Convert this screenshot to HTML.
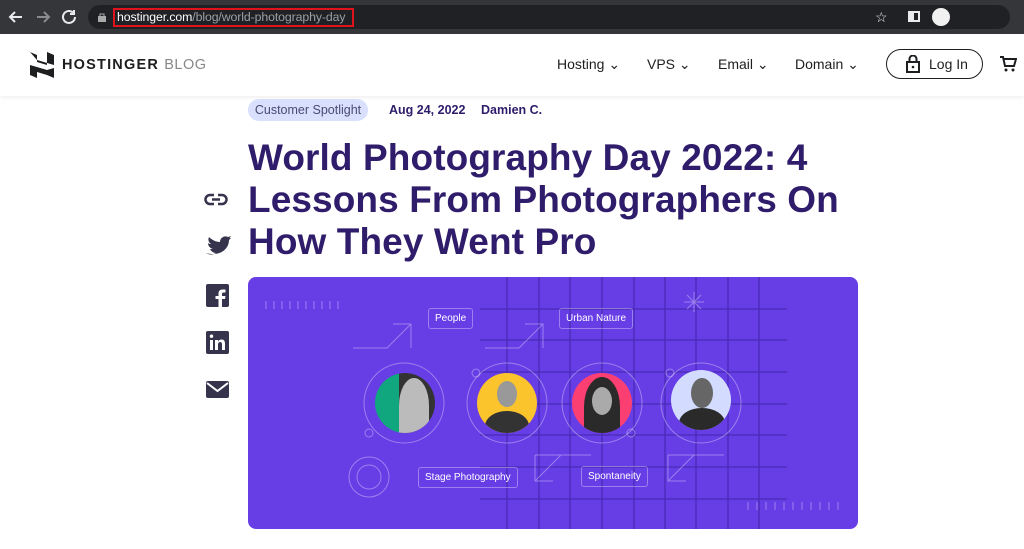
<!DOCTYPE html>
<html><head><meta charset="utf-8"><style>
*{margin:0;padding:0;box-sizing:border-box}
body{width:1024px;height:549px;overflow:hidden;background:#fff;font-family:"Liberation Sans",sans-serif;position:relative}
.chrome{position:absolute;left:0;top:0;width:1024px;height:34px;background:#35363a}
.url{position:absolute;left:88px;top:5px;width:922px;height:24px;border-radius:12px;background:#202124}
.hdr{position:absolute;left:0;top:34px;width:1024px;height:62px;background:#fff;box-shadow:0 2px 4px rgba(0,0,0,.06)}
.nav{position:absolute;top:56px;font-size:14px;color:#2f1c6a}
.title{position:absolute;left:248px;top:137px;font-size:37px;line-height:42px;font-weight:bold;color:#2f1c6a;letter-spacing:.1px}
.hero{position:absolute;left:248px;top:277px;width:610px;height:252px;background:#673de6;border-radius:8px;overflow:hidden}
.tag{position:absolute;border:1px solid rgba(255,255,255,.35);border-radius:3px;color:#fff;font-size:10px;padding:4px 6px}
.ph{position:absolute;width:60px;height:60px;border-radius:50%;overflow:hidden}
</style></head><body>
<div class="chrome">
<svg width="90" height="34" style="position:absolute;left:0;top:0"><g stroke="#e8eaed" stroke-width="2" fill="none"><path d="M22 17H10M15 12l-5 5 5 5"/><path d="M37 17h12M44 12l5 5-5 5" stroke="#8a8b8e"/><path d="M75 17a6 6 0 1 1-2-4.5M74 10v4h-4"/></g></svg>
<div class="url"></div>
<svg width="10" height="10" style="position:absolute;left:97px;top:12px"><rect x="1" y="4" width="8" height="6" fill="#aaa"/><path d="M3 4V2h4v2" stroke="#aaa" fill="none"/></svg>
<div style="position:absolute;left:113px;top:8px;width:241px;height:19px;border:2px solid #e0121b"></div>
<div style="position:absolute;left:117px;top:10px;font-size:12.3px;color:#fff;letter-spacing:-.1px">hostinger.com<span style="color:#9aa0a6">/blog/world-photography-day</span></div>
<div style="position:absolute;left:875px;top:9px;color:#e8eaed;font-size:14px">☆</div>
<div style="position:absolute;left:908px;top:11px;width:12px;height:11px;border:2px solid #e8eaed;border-left-width:6px"></div>
<div style="position:absolute;left:932px;top:8px;width:18px;height:18px;border-radius:50%;background:#f1f1f1"></div>
</div>
<div class="hdr"></div>
<svg width="24" height="26" style="position:absolute;left:30px;top:52px"><path d="M0 0l7 3v7l10 3V0l7 3v10l-17-5zM0 13l17 5v5l-10-3v6L0 23zM24 16v10l-7-3v-5z" fill="#1d1e20"/></svg>
<div style="position:absolute;left:62px;top:57px;font-size:14.5px;font-weight:bold;letter-spacing:1.2px;color:#1d1e20">HOSTINGER <span style="font-weight:normal;color:#888;letter-spacing:.5px">BLOG</span></div>
<div class="nav" style="left:557px;color:#1d1e20">Hosting ⌄</div>
<div class="nav" style="left:647px;color:#1d1e20">VPS ⌄</div>
<div class="nav" style="left:718px;color:#1d1e20">Email ⌄</div>
<div class="nav" style="left:795px;color:#1d1e20">Domain ⌄</div>
<div style="position:absolute;left:886px;top:49px;width:97px;height:30px;border:1.5px solid #1d1e20;border-radius:15px"></div>
<svg width="14" height="18" style="position:absolute;left:906px;top:55px"><rect x="1" y="7" width="12" height="10" fill="none" stroke="#1d1e20" stroke-width="2"/><path d="M3.5 7V4a3.5 3.5 0 0 1 7 0v3" fill="none" stroke="#1d1e20" stroke-width="2"/><circle cx="7" cy="12" r="1.3" fill="#1d1e20"/></svg>
<div style="position:absolute;left:929px;top:56px;font-size:14px;color:#1d1e20">Log In</div>
<svg width="18" height="18" style="position:absolute;left:999px;top:55px"><path d="M1 2h3l2 9h9l2-7H5" fill="none" stroke="#1d1e20" stroke-width="2"/><circle cx="7" cy="15" r="1.5" fill="#1d1e20"/><circle cx="14" cy="15" r="1.5" fill="#1d1e20"/></svg>

<div style="position:absolute;left:248px;top:99px;width:120px;height:22px;border-radius:11px;background:#d8e0fe;color:#4b4a72;font-size:12.5px;line-height:22px;text-align:center">Customer Spotlight</div>
<div style="position:absolute;left:389px;top:103px;font-size:12.5px;font-weight:bold;color:#2f1c6a">Aug 24, 2022</div>
<div style="position:absolute;left:481px;top:103px;font-size:12.5px;font-weight:bold;color:#2f1c6a">Damien C.</div>
<div class="title">World Photography Day 2022: 4<br>Lessons From Photographers On<br>How They Went Pro</div>

<svg width="30" height="210" style="position:absolute;left:203px;top:188px" fill="#36344d">
<g fill="none" stroke="#36344d" stroke-width="2.5"><path d="M11 7H7a4.5 4.5 0 0 0 0 9h4M15 7h4a4.5 4.5 0 0 1 0 9h-4M9 11.5h8"/></g>
<path d="M3 65c3 2 7 2 10 0-3 0-5-2-6-4h3c-3-1-5-3-5-6 1 1 2 1 3 1-3-2-3-5-2-7 3 3 7 5 11 5 0-4 4-7 8-5 1 0 2-1 3-1-1 1-1 2-2 2h2l-2 2c0 9-9 17-23 13z"/>
<rect x="3" y="96" width="23" height="23" rx="2"/><path d="M19 119v-8h3l.5-3H19v-2c0-1 .5-1.5 1.5-1.5h2v-3h-3c-3 0-4 2-4 4v2.5h-3v3h3v8z" fill="#fff"/>
<rect x="3" y="143" width="23" height="23" rx="2"/><path d="M7 152h3v10H7zM8.5 146.5a1.7 1.7 0 1 1 0 3.4 1.7 1.7 0 0 1 0-3.4zM12 152h3v1.5c.5-1 2-2 3.5-2 3 0 3.5 2 3.5 4.5v6h-3v-5.5c0-1.5-.5-2.5-1.8-2.5s-2.2 1-2.2 2.5v5.5h-3z" fill="#fff"/>
<rect x="3" y="193" width="23" height="17" rx="2"/><path d="M4 195l10.5 8 10.5-8" stroke="#fff" stroke-width="2" fill="none"/>
</svg>

<div class="hero">
<svg width="610" height="252" style="position:absolute;left:0;top:0">
<g stroke="#4a2bb5" stroke-width="1.3">
<path d="M259 0V252M291 0V252M322 0V252M354 0V252M386 0V252M417 0V252M448 0V252M480 0V252M511 0V252"/>
<path d="M232 32H539M232 63H539M232 95H539M232 127H539M232 158H539M232 190H539M232 222H539"/>
</g>
<g stroke="rgba(255,255,255,.35)" fill="none" stroke-width="1">
<path d="M18 24v8M26 24v8M34 24v8M42 24v8M50 24v8M58 24v8M66 24v8M74 24v8M82 24v8M90 24v8"/>
<path d="M500 225v8M509 225v8M518 225v8M527 225v8M536 225v8M545 225v8M554 225v8M563 225v8M572 225v8M581 225v8M590 225v8"/>
<path d="M105 71h34l24-24M145 47h18v24M237 71h34l24-24M277 47h18v24"/>
<path d="M287 178h56M287 178v26h18M420 178h56M420 178v26h18M287 204l26-26M420 204l26-26"/>
<circle cx="156" cy="126" r="40"/><circle cx="259" cy="126" r="40"/><circle cx="354" cy="126" r="40"/><circle cx="453" cy="126" r="40"/>
<circle cx="121" cy="156" r="4"/><circle cx="228" cy="96" r="4"/><circle cx="383" cy="156" r="4"/><circle cx="422" cy="96" r="4"/>
<circle cx="121" cy="200" r="20"/><circle cx="121" cy="200" r="12"/>
<path d="M446 15v20M436 25h20M439 18l14 14M453 18l-14 14"/>
</g></svg>
<div class="tag" style="left:180px;top:31px">People</div>
<div class="tag" style="left:311px;top:31px">Urban Nature</div>
<div class="tag" style="left:170px;top:190px">Stage Photography</div>
<div class="tag" style="left:333px;top:189px">Spontaneity</div>
<div class="ph" style="left:127px;top:96px;background:linear-gradient(90deg,#10a67e 40%,#333 40%)"><div style="position:absolute;left:24px;top:5px;width:30px;height:55px;border-radius:50% 50% 0 0;background:#bbb"></div></div>
<div class="ph" style="left:229px;top:96px;background:#fbc32c"><div style="position:absolute;left:20px;top:8px;width:20px;height:26px;border-radius:50%;background:#999"></div><div style="position:absolute;left:8px;top:38px;width:44px;height:30px;border-radius:50%;background:#333"></div></div>
<div class="ph" style="left:324px;top:96px;background:#fc3f72"><div style="position:absolute;left:12px;top:4px;width:36px;height:60px;border-radius:50% 50% 0 0;background:#2a2a2a"></div><div style="position:absolute;left:20px;top:14px;width:20px;height:28px;border-radius:50%;background:#aaa"></div></div>
<div class="ph" style="left:423px;top:93px;background:#d3dcff"><div style="position:absolute;left:20px;top:8px;width:22px;height:30px;border-radius:50%;background:#666"></div><div style="position:absolute;left:8px;top:38px;width:46px;height:30px;border-radius:50%;background:#2a2a2a"></div></div>
</div>
</body></html>
